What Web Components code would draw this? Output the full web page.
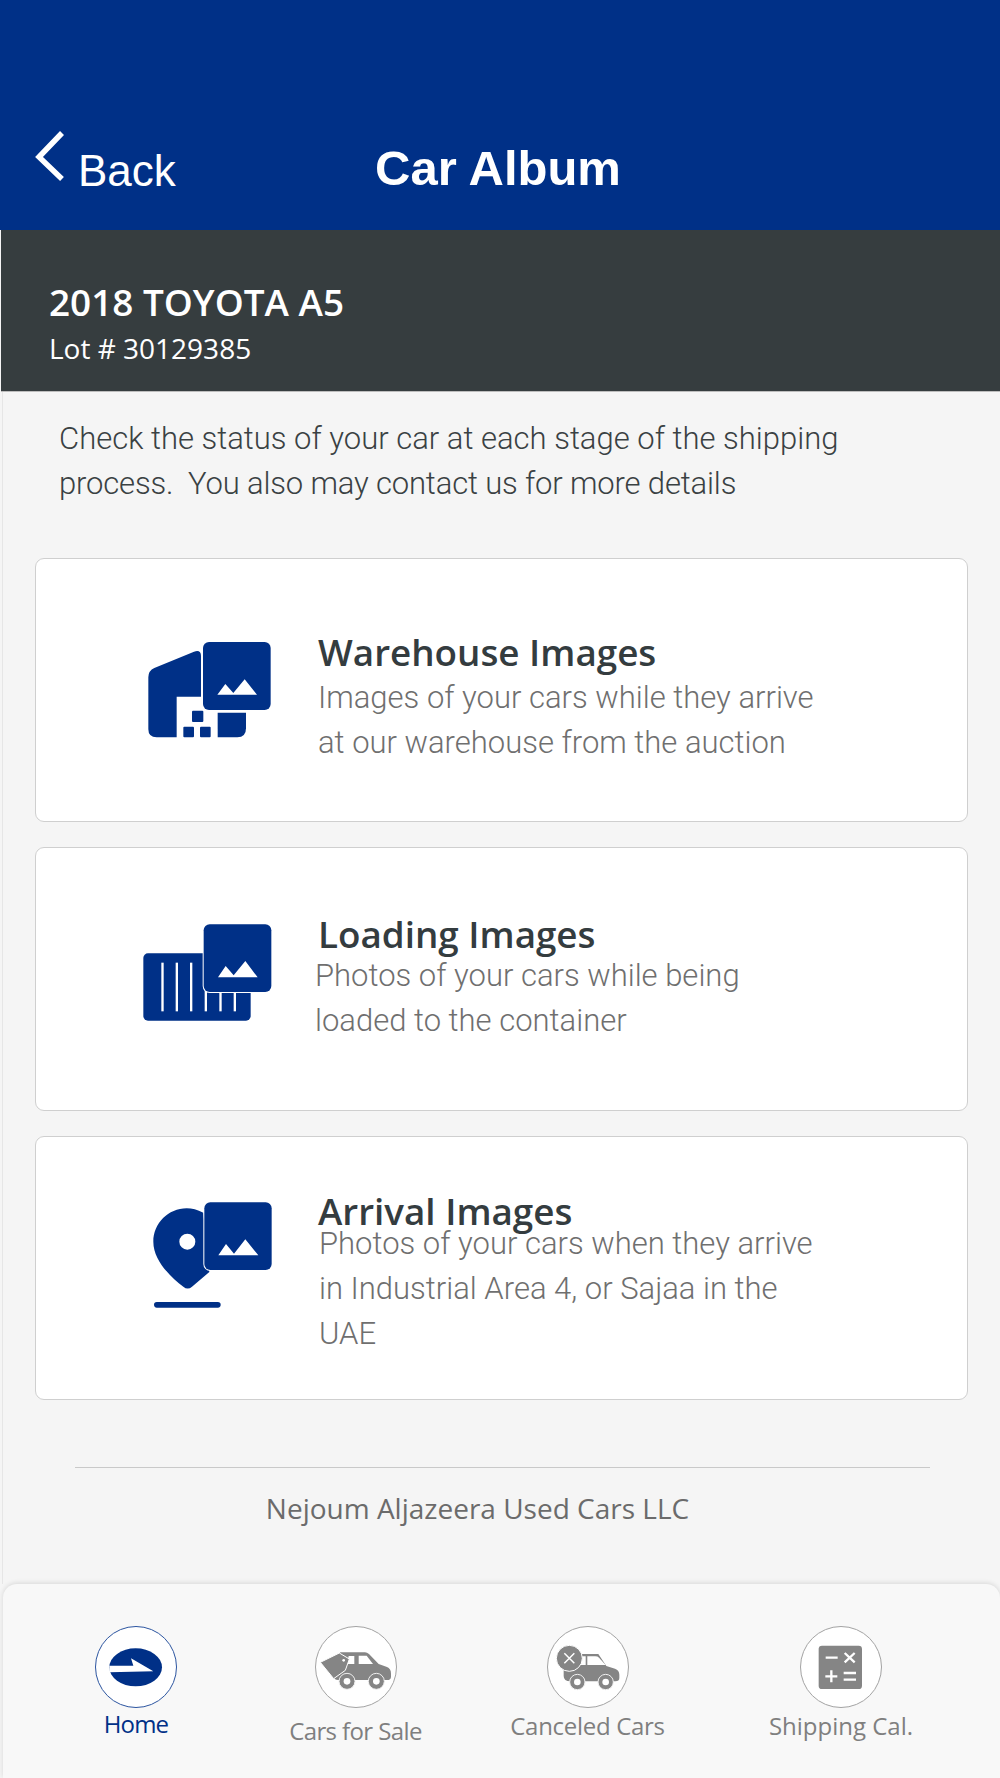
<!DOCTYPE html>
<html><head><meta charset="utf-8"><style>
html,body{margin:0;padding:0;background:#f5f5f5}
</style></head><body>
<album-app>
  <app-header title-text="Car Album"></app-header>
  <car-banner name="2018 TOYOTA A5" lot="Lot # 30129385"></car-banner>
  <album-main>
    <p slot="intro">Check the status of your car at each stage of the shipping<br><span style="letter-spacing:-.16px">process.&nbsp; You also may contact us for more details</span></p>
    <album-card kind="warehouse" style="--icon-top:61px;--text-top:69px;--desc-left:0px;--desc-top:-1px;--title-left:0px" heading="Warehouse Images">Images of your cars while they arrive<br>at our warehouse from the auction</album-card>
    <album-card kind="loading" style="--icon-top:52px;--text-top:62px;--title-left:0px;--desc-left:-3px;--desc-top:-5px" heading="Loading Images">Photos of your cars while being<br>loaded to the container</album-card>
    <album-card kind="arrival" style="--icon-top:43px;--text-top:50px;--title-left:0px;--desc-left:1px;--desc-top:-14px" heading="Arrival Images">Photos of your cars when they arrive<br>in Industrial Area 4, or Sajaa in the<br>UAE</album-card>
    <span slot="company">Nejoum Aljazeera Used Cars LLC</span>
  </album-main>
  <tab-bar>
    <tab-item active icon="home" label="Home" style="--lift:2px;--ls:-.8px"></tab-item>
    <tab-item icon="sale" label="Cars for Sale" style="--lift:9px;--ls:-.6px"></tab-item>
    <tab-item icon="cancel" label="Canceled Cars" style="--lift:4px;--ls:-.3px"></tab-item>
    <tab-item icon="calc" label="Shipping Cal." style="--lift:4px;--ls:0px"></tab-item>
  </tab-bar>
</album-app>
<script>
const BLUE='#003087', GRAY='#858585';
function def(name, render){
  customElements.define(name, class extends HTMLElement{
    connectedCallback(){
      if(this.shadowRoot) return;
      this.attachShadow({mode:'open'}).innerHTML = render(this);
    }
  });
}
def('album-app',()=>`<style>:host{display:flex;flex-direction:column;width:1000px;height:1778px;overflow:hidden;background:#f5f5f5}</style><slot></slot>`);
def('app-header',el=>`<style>
:host{display:grid;grid-template-columns:375px auto;height:230px;flex:none;background:${BLUE};color:#fff;font-family:"Liberation Sans",Arial,sans-serif;box-sizing:border-box}
.back{display:flex;align-items:flex-start;padding:130px 0 0 33px;gap:12px}
.back span{font-size:44px;line-height:50px;margin-top:16px}
h1{margin:0;padding-top:141px;font-size:49px;line-height:54px;font-weight:700}
</style>
<div class="back"><svg width="33" height="52" viewBox="0 0 33 52"><path d="M29 3 L6 27 L29 49" fill="none" stroke="#fff" stroke-width="5.5"/></svg><span>Back</span></div>
<h1>${el.getAttribute('title-text')}</h1>`);
def('car-banner',el=>`<style>
:host{display:block;height:162px;flex:none;margin-left:1px;background:#363d3f;color:#fff;font-family:"Open Sans",sans-serif;box-sizing:border-box;padding:47px 0 0 48px;border-bottom:1px solid #bdbdbd}
.n{font-size:36.9px;line-height:50px;font-weight:600}
.l{font-size:28px;line-height:36px;margin-top:3px}
</style><div class="n">${el.getAttribute('name')}</div><div class="l">${el.getAttribute('lot')}</div>`);
def('album-main',()=>`<style>
:host{display:flex;flex-direction:column;flex:1;min-height:0;margin-left:2px;border-left:1px solid #e6e6e6;box-sizing:border-box}
::slotted(p){margin:0;padding:24px 0 0 56px;font:300 31px/45px Roboto,sans-serif;color:#3a4143;height:152px;box-sizing:border-box}
.cards{display:flex;flex-direction:column;gap:25px;padding:14px 32px 0 32px}
.foot{margin:67px 70px 0 72px;border-top:1px solid #c9c9c9;padding-top:21px;text-align:center;font:400 28px/38px "Open Sans",sans-serif;color:#6b6b6b;padding-right:50px}
</style><slot name="intro"></slot><div class="cards"><slot></slot></div><div class="foot"><slot name="company"></slot></div>`);
const photo=(x,y,w,h,m)=>`<rect x="${x}" y="${y}" width="${w}" height="${h}" rx="18" fill="${BLUE}" stroke="#fff" stroke-width="6" paint-order="stroke"/><path d="${m}" fill="#fff"/>`;
const icons={
 warehouse:`<path fill="${BLUE}" d="M85 172Q85 152 103 144L222 95Q243 88 243 108V230H170V352H110Q85 352 85 328Z"/><path fill="${BLUE}" d="M293 278H378V325Q378 352 352 352H293Z"/><rect x="216" y="272" width="34" height="34" rx="3" fill="${BLUE}"/><rect x="190" y="320" width="32" height="32" rx="3" fill="${BLUE}"/><rect x="240" y="320" width="32" height="32" rx="3" fill="${BLUE}"/>`+photo(249,66,203,204,'M292 224L316 192L340 219L374 178L411 224Z'),
 loading:`<rect x="70" y="160" width="322" height="202" rx="14" fill="${BLUE}"/><g fill="#fff"><rect x="124" y="188" width="7" height="146"/><rect x="167" y="188" width="7" height="146"/><rect x="210" y="188" width="7" height="146"/><rect x="254" y="270" width="7" height="64"/><rect x="298" y="270" width="7" height="64"/><rect x="341" y="270" width="7" height="64"/></g>`+photo(251,73,203,203,'M294 232L317 198L341 226L376 183L413 232Z'),
 arrival:`<path fill="${BLUE}" fill-rule="evenodd" d="M250 98C232 89 216 85 200 85C145 85 100 130 100 185C100 240 150 290 190 320Q203 331 216 320L268 276ZM202 161A24 24 0 1 1 202 209A24 24 0 1 1 202 161Z"/><rect x="102" y="366" width="200" height="17" rx="8.5" fill="${BLUE}"/>`+photo(253,67,202,203,'M295 226L318 192L342 221L376 178L415 226Z')
};
def('album-card',el=>`<style>
:host{display:grid;grid-template-columns:184px 1fr;height:264px;box-sizing:border-box;background:#fff;border:1px solid #cfcfcf;border-radius:9px;padding-left:84px}
svg{display:block;margin-top:var(--icon-top)}
.t{padding:var(--text-top) 0 0 14px}
h2{margin:0 0 0 var(--title-left,0);font:600 36.8px/48px "Open Sans",sans-serif;color:#343c3f}
.d{margin:var(--desc-top,0) 0 0 var(--desc-left,0);font:300 31px/45px Roboto,sans-serif;color:#6f6f6f}
</style><svg width="180" height="140" viewBox="0 0 540 420">${icons[el.getAttribute('kind')]}</svg>
<div class="t"><h2>${el.getAttribute('heading')}</h2><div class="d"><slot></slot></div></div>`);
def('tab-bar',()=>`<style>
:host{display:grid;grid-template-columns:266px 173px 291px 216px;height:194px;flex:none;margin-left:3px;box-sizing:border-box;background:#f8f8f8;border-radius:14px 14px 0 0;box-shadow:0 -1px 5px rgba(0,0,0,.12);padding-top:42px}
</style><slot></slot>`);
const tabIcons={
 home:`<ellipse cx="122" cy="124" rx="79" ry="57" fill="${BLUE}"/><path d="M43 119H115L108 97L175 136L43 139Z" fill="#fff"/>`,
 sale:`<path fill="${GRAY}" d="M76 79H150Q156 79 162 84L191 114L216 123Q228 128 228 143V152Q228 162 216 162H70Q56 162 56 150V110Z"/><path fill="#fff" d="M131 89H155L174 114H131Z"/><path fill="#fff" d="M101 90H118V114H96Z"/><g fill="${GRAY}" stroke="#f0f0f0" stroke-width="3"><circle cx="96" cy="166" r="24"/><circle cx="184" cy="166" r="24"/></g><circle cx="96" cy="166" r="10" fill="#fff"/><circle cx="184" cy="166" r="10" fill="#fff"/><path fill="${GRAY}" stroke="#fff" stroke-width="3" d="M16 109L73 81L103 99L91 133L56 158Z"/><circle cx="86" cy="103" r="4" fill="#fff"/>`,
 cancel:`<path fill="${GRAY}" d="M50 120V84H154L178 120L204 128Q217 132 217 146V156Q217 166 205 166H70Q50 166 50 150Z"/><path fill="#fff" d="M121 91H145Q152 91 156 95L176 117H121Z"/><path fill="#fff" d="M96 91H116V117H100Z"/><g fill="${GRAY}" stroke="#f0f0f0" stroke-width="3"><circle cx="91" cy="168" r="23"/><circle cx="176" cy="168" r="23"/></g><circle cx="91" cy="168" r="10" fill="#fff"/><circle cx="176" cy="168" r="10" fill="#fff"/><circle cx="67" cy="97" r="39" fill="${GRAY}" stroke="#fff" stroke-width="3"/><path d="M52 82L82 112M82 82L52 112" stroke="#fff" stroke-width="4.5" fill="none"/>`,
 calc:`<rect x="56" y="59" width="130" height="130" rx="10" fill="${GRAY}"/><g stroke="#fff" stroke-width="7" fill="none"><path d="M77 95H113M134 81L164 109M164 81L134 109M76 151H112M94 133V169M131 141H168M131 161H168"/></g>`
};
def('tab-item',el=>{const a=el.hasAttribute('active');return `<style>
:host{display:flex;flex-direction:column;align-items:center;font:400 24px/32px "Open Sans",sans-serif;color:${a?BLUE:'#7f7f7f'}}
.c{width:82px;height:82px;box-sizing:border-box;border:1px solid ${a?'#2c55a0':'#a3a3a3'};border-radius:50%;background:#fff;flex:none}
svg{display:block;margin:-1px}
span{margin-top:calc(var(--lift) - 2px);white-space:nowrap;letter-spacing:var(--ls)}
</style><div class="c"><svg width="82" height="82" viewBox="0 0 246 246">${tabIcons[el.getAttribute('icon')]}</svg></div><span>${el.getAttribute('label')}</span>`});
</script>
</body></html>
